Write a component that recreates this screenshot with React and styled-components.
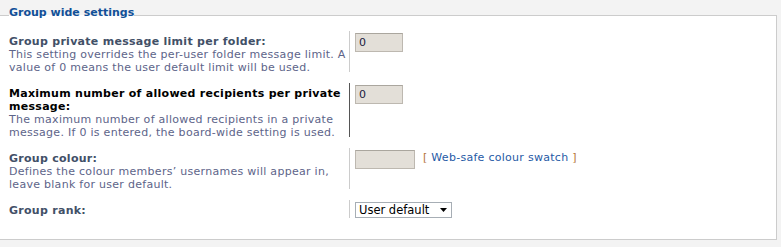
import React from "react";
import styled, { createGlobalStyle } from "styled-components";

const Global = createGlobalStyle`
  html, body { margin: 0; padding: 0; background: #f3f3f3; }
  body { font-family: "DejaVu Sans", Verdana, sans-serif; }
`;

const Page = styled.div`
  width: 781px;
  height: 247px;
  overflow: hidden;
  padding-top: 6px;
  box-sizing: border-box;
`;

const Fieldset = styled.fieldset`
  margin: 0 4px 0 -4px;
  padding: 7px 0 21px 12px;
  border: 1px solid #cccccc;
  background: #ffffff;
  min-width: 0;
`;

const Legend = styled.legend`
  padding: 0 0 4px 0;
  margin: 0;
  font-family: "DejaVu Sans", Tahoma, sans-serif;
  font-size: 11px;
  line-height: 14px;
  font-weight: bold;
  color: #115098;
`;

const Row = styled.div`
  display: flex;
  align-items: stretch;
  margin-bottom: ${(p) => (p.$last ? 0 : 11)}px;
`;

const Term = styled.div`
  width: 340px;
  padding-top: 4px;
  border-right: 1px solid ${(p) => (p.$dark ? "#555555" : "#cccccc")};
  font-size: 11px;
  letter-spacing: 0.28px;
  line-height: 13px;
`;

const Label = styled.div`
  font-weight: bold;
  color: ${(p) => (p.$dark ? "#000000" : "#425067")};
`;

const Explain = styled.div`
  color: #5d6489;
  margin-bottom: -2px;
`;

const Def = styled.div`
  margin-left: 5px;
  padding-top: 2px;
  display: flex;
  align-items: flex-start;
  gap: 8px;
`;

const TextBox = styled.div`
  width: ${(p) => p.$w}px;
  height: 19px;
  box-sizing: border-box;
  background: #e3dfd8;
  border: 1px solid #bdb8b0;
  border-top-color: #aaa69e;
  padding: 2px 3px;
  font-size: 11px;
  line-height: 14px;
  color: #1a1a40;
`;

const Swatch = styled.span`
  font-size: 11px;
  letter-spacing: 0.28px;
  line-height: 14px;
  color: #b5753b;
  padding-top: 1px;
`;

const SwatchLink = styled.a`
  color: #1f5aa5;
  text-decoration: none;
`;

const Select = styled.div`
  width: 97px;
  height: 16px;
  box-sizing: border-box;
  background: #ffffff;
  border: 1px solid #a7aeb5;
  display: flex;
  align-items: center;
  justify-content: space-between;
  padding: 0 4px 0 3px;
  font-size: 11.5px;
  color: #000000;
`;

const rows = [
  {
    label: "Group private message limit per folder:",
    explain:
      "This setting overrides the per-user folder message limit. A value of 0 means the user default limit will be used.",
    value: "0",
  },
  {
    label: "Maximum number of allowed recipients per private message:",
    explain:
      "The maximum number of allowed recipients in a private message. If 0 is entered, the board-wide setting is used.",
    value: "0",
    dark: true,
  },
];

export default function App() {
  return (
    <Page>
      <Global />
      <Fieldset>
        <Legend>Group wide settings</Legend>
        {rows.map((r) => (
          <Row key={r.label}>
            <Term $dark={r.dark}>
              <Label $dark={r.dark}>{r.label}</Label>
              <Explain>{r.explain}</Explain>
            </Term>
            <Def>
              <TextBox $w={48}>{r.value}</TextBox>
            </Def>
          </Row>
        ))}
        <Row>
          <Term>
            <Label>Group colour:</Label>
            <Explain>
              Defines the colour members’ usernames will appear in, leave blank
              for user default.
            </Explain>
          </Term>
          <Def>
            <TextBox $w={60} />
            <Swatch>
              [ <SwatchLink href="#">Web-safe colour swatch</SwatchLink> ]
            </Swatch>
          </Def>
        </Row>
        <Row $last>
          <Term>
            <Label>Group rank:</Label>
          </Term>
          <Def>
            <Select>
              <span>User default</span>
              <svg width="7" height="4" viewBox="0 0 7 4">
                <path d="M0 0h7L3.5 4z" fill="#000" />
              </svg>
            </Select>
          </Def>
        </Row>
      </Fieldset>
    </Page>
  );
}
